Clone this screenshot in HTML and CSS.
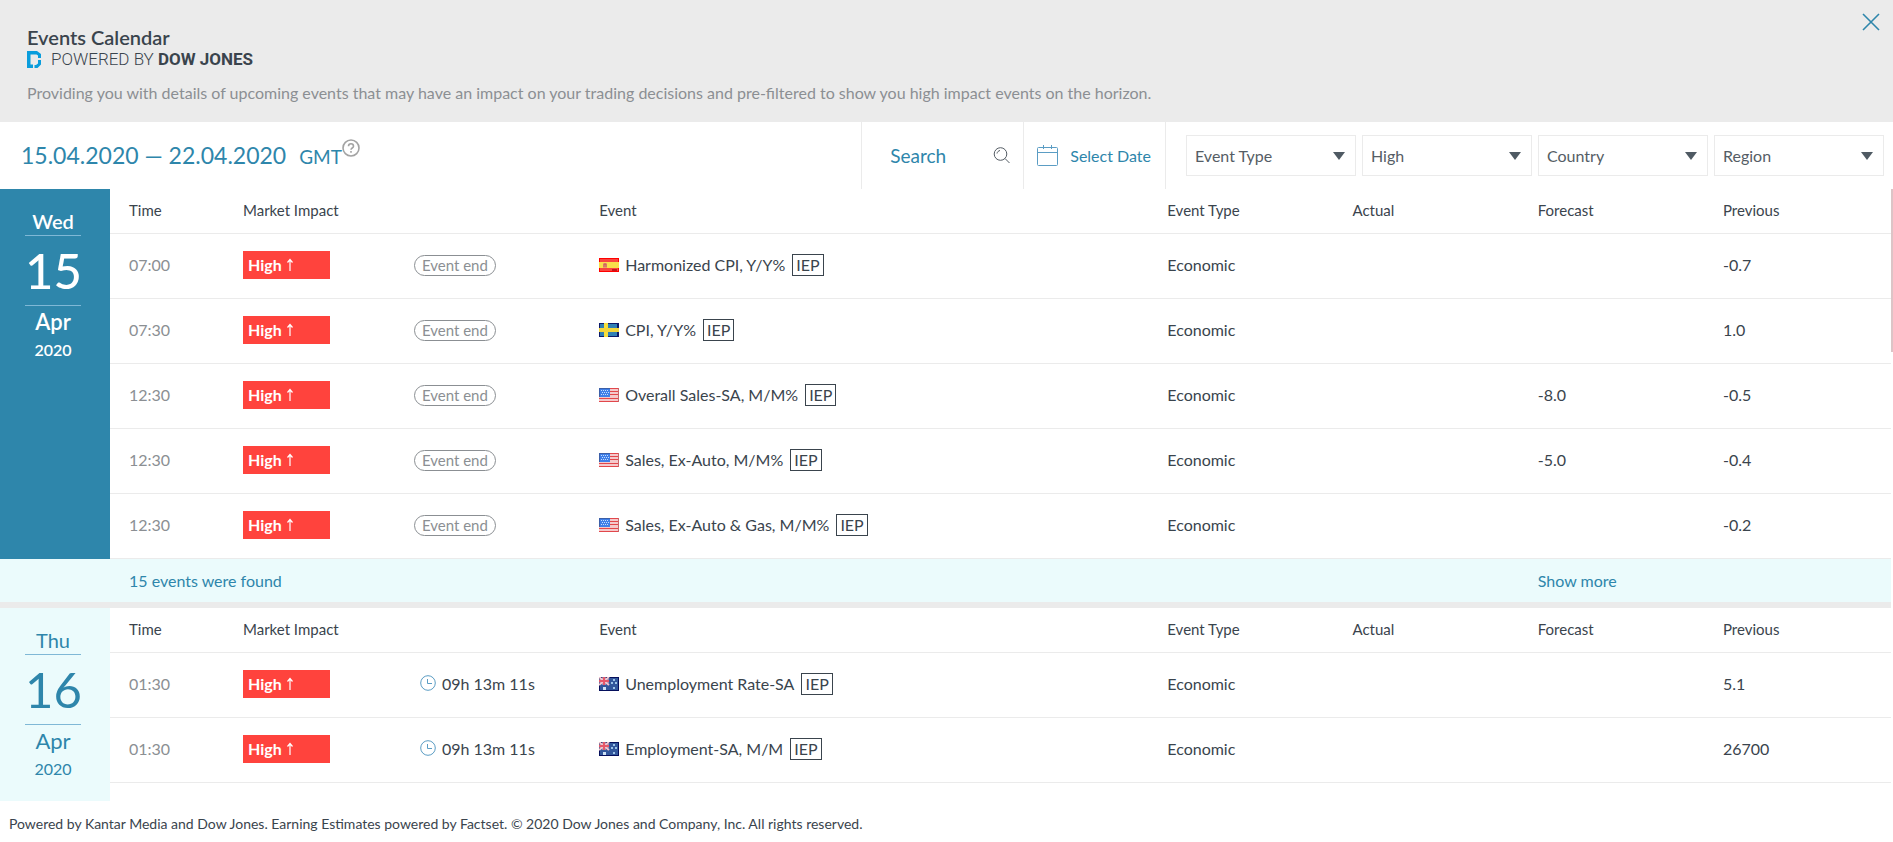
FILE: index.html
```html
<!DOCTYPE html>
<html lang="en">
<head>
  <meta charset="UTF-8">
  <meta name="viewport" content="width=device-width, initial-scale=1.0">
  <title>Events Calendar</title>
  <link rel="stylesheet" href="styles.css">
</head>
<body>

  <!-- Shared icons -->
  <svg class="sprite" aria-hidden="true">
    <symbol id="flag-es" viewBox="0 0 20 14">
      <rect width="20" height="14" fill="#f00"/>
      <rect x="1" y="1" width="18" height="12" fill="#f8453f"/>
      <rect y="4" width="20" height="6" fill="#f9e04a"/>
      <rect x="4" y="5" width="4" height="5" fill="#e9a06a"/>
      <path d="M5 9V6h2v3" fill="none" stroke="#c8525a"/>
      <path d="M13 11h5v2h-5z" fill="#c3161c"/>
    </symbol>
    <symbol id="flag-se" viewBox="0 0 20 14">
      <rect width="20" height="14" fill="#0b1a6b"/>
      <rect x="1" y="1" width="17" height="12" fill="#2f7fb4"/>
      <rect x="5" width="4" height="14" fill="#f7df3c"/>
      <rect y="5" width="20" height="4" fill="#f0d53c"/>
    </symbol>
    <symbol id="flag-us" viewBox="0 0 20 14">
      <rect width="20" height="14" fill="#f4c9cb"/>
      <path d="M0 .5h20M11 3.500h9M11 6.500h9M0 10.500h20M0 13.500h20" stroke="#e2474b"/>
      <path d="M19.500 0v14" stroke="#c9656a"/>
      <rect width="11" height="9" fill="#3f7fe8"/>
      <path d="M0 .5h11M.5 0v9" stroke="#3c5fa8"/>
      <path d="M2 2.500h8M3 4.500h8M2 6.500h8" stroke="#c5dcfb" stroke-dasharray="1 1"/>
    </symbol>
    <symbol id="flag-au" viewBox="0 0 20 14">
      <rect width="20" height="14" fill="#050f5c"/>
      <rect width="18" height="12" x="1" y="1" fill="#32579c"/>
      <path d="M0 0l10 8M10 0L0 8" stroke="#f3c3cb" stroke-width="2"/>
      <path d="M5 0v8M0 4h10" stroke="#f3c3cb" stroke-width="3"/>
      <path d="M5 0v8M0 4h10" stroke="#e5586a" stroke-width="2"/>
      <path d="M4 10h3v3H4z" fill="#cfe2f5"/>
      <path d="M14 2h2v2h-2zM12 5h2v2h-2zM16 5h2v2h-2zM14 10h2v2h-2z" fill="#9dc3e8"/>
    </symbol>
    <symbol id="icon-clock" viewBox="0 0 16 16">
      <circle cx="8" cy="8" r="7.300" fill="none" stroke="#5b9dc4"/>
      <path d="M7.500 4v4.500H12" fill="none" stroke="#5b9dc4"/>
    </symbol>
    <symbol id="icon-up" viewBox="0 0 8 14">
      <path d="M4 13V2M1.500 4.500L4 1.500l2.500 3" fill="none" stroke="#fff" stroke-width="1.200"/>
    </symbol>
  </svg>

  <header class="header">
    <div class="header-text">
      <h1>Events Calendar</h1>
      <div class="powered">
        <svg width="14" height="17" viewBox="0 0 14 17" aria-hidden="true">
          <path d="M0 0h10l4 3v4h-3V4.500L9.500 3.500H3.500v10H6V17H0zM14 9v4.500L10.500 17H7.500v-3h1.500l2-1.500V9z" fill="#0a9ddc"/>
        </svg>
        <span>POWERED BY <b>DOW JONES</b></span>
      </div>
      <p>Providing you with details of upcoming events that may have an impact on your trading decisions and pre-filtered to show you high impact events on the horizon.</p>
    </div>
    <button class="close-btn" aria-label="Close">
      <svg width="18" height="18" viewBox="0 0 18 18"><path d="M1 1l16 16M17 1L1 17" stroke="#2e86ab" stroke-width="1.600"/></svg>
    </button>
  </header>

  <div class="toolbar">
    <div class="period">
      <span class="period-dates">15.04.2020 — 22.04.2020</span>
      <span class="period-zone">GMT</span>
      <button class="help-btn" aria-label="Time zone help">
        <svg width="18" height="18" viewBox="0 0 18 18" fill="none" stroke="#a3a3a3">
          <circle cx="9" cy="9" r="8" stroke-width="1.600"/>
          <path d="M6.500 7.200c0-3.200 5-3.200 5 0 0 1.800-2.500 1.800-2.500 3.600M9 12v1.800" stroke-width="1.600"/>
        </svg>
      </button>
    </div>

    <div class="search">
      <input type="text" placeholder="Search" aria-label="Search">
      <button class="icon-btn" aria-label="Search events">
        <svg width="17" height="17" viewBox="0 0 17 17" fill="none" stroke="#555d65">
          <circle cx="7.500" cy="7" r="6.300"/>
          <path d="M12 11.500l4.500 4.500M4 6.500c.3-1.700 1.500-2.700 3-3"/>
        </svg>
      </button>
    </div>

    <button class="date-btn">
      <svg width="21" height="21" viewBox="0 0 21 21" fill="none" stroke="#5b9dc4">
        <rect x=".5" y="2.500" width="20" height="18" rx="1"/>
        <path d="M0 7.500h21M6.500 0v4M14.500 0v4"/>
      </svg>
      Select Date
    </button>

    <div class="filters">
      <select aria-label="Event Type"><option>Event Type</option></select>
      <select aria-label="Market Impact"><option>High</option></select>
      <select aria-label="Country"><option>Country</option></select>
      <select aria-label="Region"><option>Region</option></select>
    </div>
  </div>

  <main class="events">
    <section class="day">
      <div class="day-date today">
        <span class="weekday">Wed</span>
        <span class="number">15</span>
        <span class="month">Apr</span>
        <span class="year">2020</span>
      </div>
      <table class="day-table">
        <thead>
          <tr>
            <th class="col-time">Time</th>
            <th class="col-impact">Market Impact</th>
            <th class="col-status"></th>
            <th class="col-event">Event</th>
            <th class="col-value">Event Type</th>
            <th class="col-value">Actual</th>
            <th class="col-value">Forecast</th>
            <th>Previous</th>
          </tr>
        </thead>
        <tbody>
          <tr>
            <td class="time">07:00</td>
            <td><span class="impact">High <svg><use href="#icon-up"/></svg></span></td>
            <td><span class="ended">Event end</span></td>
            <td><div class="event"><svg class="flag"><use href="#flag-es"/></svg>Harmonized CPI, Y/Y%<span class="tag">IEP</span></div></td>
            <td>Economic</td>
            <td></td>
            <td></td>
            <td>-0.7</td>
          </tr>
          <tr>
            <td class="time">07:30</td>
            <td><span class="impact">High <svg><use href="#icon-up"/></svg></span></td>
            <td><span class="ended">Event end</span></td>
            <td><div class="event"><svg class="flag"><use href="#flag-se"/></svg>CPI, Y/Y%<span class="tag">IEP</span></div></td>
            <td>Economic</td>
            <td></td>
            <td></td>
            <td>1.0</td>
          </tr>
          <tr>
            <td class="time">12:30</td>
            <td><span class="impact">High <svg><use href="#icon-up"/></svg></span></td>
            <td><span class="ended">Event end</span></td>
            <td><div class="event"><svg class="flag"><use href="#flag-us"/></svg>Overall Sales-SA, M/M%<span class="tag">IEP</span></div></td>
            <td>Economic</td>
            <td></td>
            <td>-8.0</td>
            <td>-0.5</td>
          </tr>
          <tr>
            <td class="time">12:30</td>
            <td><span class="impact">High <svg><use href="#icon-up"/></svg></span></td>
            <td><span class="ended">Event end</span></td>
            <td><div class="event"><svg class="flag"><use href="#flag-us"/></svg>Sales, Ex-Auto, M/M%<span class="tag">IEP</span></div></td>
            <td>Economic</td>
            <td></td>
            <td>-5.0</td>
            <td>-0.4</td>
          </tr>
          <tr>
            <td class="time">12:30</td>
            <td><span class="impact">High <svg><use href="#icon-up"/></svg></span></td>
            <td><span class="ended">Event end</span></td>
            <td><div class="event"><svg class="flag"><use href="#flag-us"/></svg>Sales, Ex-Auto &amp; Gas, M/M%<span class="tag">IEP</span></div></td>
            <td>Economic</td>
            <td></td>
            <td></td>
            <td>-0.2</td>
          </tr>
        </tbody>
      </table>
    </section>

    <div class="summary">
      <span>15 events were found</span>
      <a href="#">Show more</a>
    </div>

    <section class="day last">
      <div class="day-date">
        <span class="weekday">Thu</span>
        <span class="number">16</span>
        <span class="month">Apr</span>
        <span class="year">2020</span>
      </div>
      <table class="day-table">
        <thead>
          <tr>
            <th class="col-time">Time</th>
            <th class="col-impact">Market Impact</th>
            <th class="col-status"></th>
            <th class="col-event">Event</th>
            <th class="col-value">Event Type</th>
            <th class="col-value">Actual</th>
            <th class="col-value">Forecast</th>
            <th>Previous</th>
          </tr>
        </thead>
        <tbody>
          <tr>
            <td class="time">01:30</td>
            <td><span class="impact">High <svg><use href="#icon-up"/></svg></span></td>
            <td><div class="countdown"><svg><use href="#icon-clock"/></svg>09h 13m 11s</div></td>
            <td><div class="event"><svg class="flag"><use href="#flag-au"/></svg>Unemployment Rate-SA<span class="tag">IEP</span></div></td>
            <td>Economic</td>
            <td></td>
            <td></td>
            <td>5.1</td>
          </tr>
          <tr>
            <td class="time">01:30</td>
            <td><span class="impact">High <svg><use href="#icon-up"/></svg></span></td>
            <td><div class="countdown"><svg><use href="#icon-clock"/></svg>09h 13m 11s</div></td>
            <td><div class="event"><svg class="flag"><use href="#flag-au"/></svg>Employment-SA, M/M<span class="tag">IEP</span></div></td>
            <td>Economic</td>
            <td></td>
            <td></td>
            <td>26700</td>
          </tr>
        </tbody>
      </table>
    </section>

    <div class="scroll-thumb"></div>
  </main>

  <footer class="footer">
    <p>Powered by Kantar Media and Dow Jones. Earning Estimates powered by Factset. © 2020 Dow Jones and Company, Inc. All rights reserved.</p>
  </footer>

</body>
</html>
```

FILE: styles.css
```css
* {
  margin: 0;
  padding: 0;
  box-sizing: border-box;
}

body {
  font-family: Lato, "Liberation Sans", sans-serif;
  font-size: 16px;
  line-height: 20px;
  color: #3a444d;
  background-color: #fff;
}

button,
input,
select {
  font-family: inherit;
  background: none;
  border: none;
}

button {
  cursor: pointer;
}

svg {
  display: block;
  flex-shrink: 0;
}

.sprite {
  position: absolute;
  width: 0;
  height: 0;
}

/* Header */
.header {
  display: flex;
  justify-content: space-between;
  align-items: flex-start;
  padding: 13px 13px 19px 27px;
  background-color: #ebebeb;
}

.header-text {
  padding-top: 12px;
}

.header h1 {
  font-size: 20px;
  line-height: 24px;
  font-weight: 600;
}

.powered {
  display: flex;
  align-items: center;
  gap: 10px;
  height: 20px;
  font-family: Roboto, sans-serif;
  font-size: 17px;
  font-weight: 300;
}

.powered b {
  font-weight: 700;
}

.header p {
  margin-top: 14px;
  color: #8b8f93;
}

/* Toolbar */
.toolbar {
  display: flex;
  height: 67px;
  color: #2e86ab;
}

.period {
  display: flex;
  flex: 1;
  align-items: baseline;
  padding: 17px 0 0 21px;
}

.period-dates {
  font-size: 23px;
  line-height: 32px;
}

.period-zone {
  margin-left: 13px;
  font-size: 19px;
}

.help-btn {
  align-self: flex-start;
}

.search {
  display: flex;
  align-items: center;
  width: 163px;
  padding: 0 13px 0 28px;
  border-left: 1px solid #ebebeb;
  border-right: 1px solid #ebebeb;
}

.search input {
  flex: 1;
  min-width: 0;
  font-size: 19px;
  color: #2e86ab;
}

.search input::placeholder {
  color: #2e86ab;
}

.date-btn {
  display: flex;
  align-items: center;
  gap: 12px;
  padding: 0 14px 0 13px;
  border-right: 1px solid #ebebeb;
  font-size: 16px;
  color: #2e86ab;
}

.filters {
  display: flex;
  align-items: center;
  gap: 6px;
  padding: 0 9px 0 20px;
}

.filters select {
  appearance: none;
  width: 170px;
  height: 41px;
  padding: 0 8px;
  border: 1px solid #ebebeb;
  background: url("data:image/svg+xml,%3Csvg xmlns='http://www.w3.org/2000/svg' width='12' height='8'%3E%3Cpath d='M0 0h12L6 8z' fill='%234f5a63'/%3E%3C/svg%3E") no-repeat right 10px center;
  font-size: 16px;
  color: #555d65;
}

/* Days */
.events {
  position: relative;
  padding-right: 2px;
}

.day {
  display: flex;
}

.day.last {
  min-height: 193px;
  border-top: 6px solid #ebebeb;
  box-sizing: content-box;
}

.day-date {
  display: flex;
  flex-direction: column;
  align-items: center;
  flex-shrink: 0;
  width: 110px;
  padding: 19px 4px 0 0;
  background-color: #ebfbfc;
  color: #2e86ab;
}

.day-date.today {
  background-color: #2e86ab;
  color: #fff;
  font-weight: 600;
}

.weekday {
  margin-bottom: 1px;
  font-size: 20px;
  line-height: 26px;
}

.number {
  width: 56px;
  border-top: 1px solid #7fb8d6;
  border-bottom: 1px solid #7fb8d6;
  font-size: 49px;
  line-height: 69px;
  text-align: center;
}

.today .number {
  font-weight: 500;
}

.month {
  font-size: 22px;
  line-height: 32px;
}

.year {
  font-size: 16px;
  line-height: 24px;
}

.day-table {
  flex: 1;
  width: 100%;
  align-self: flex-start;
  table-layout: fixed;
  border-collapse: separate;
  border-spacing: 0;
  text-align: left;
}

.day-table th,
.day-table td {
  padding: 0 0 2px 19px;
  border-bottom: 1px solid #ebebeb;
}

.day-table th {
  height: 45px;
  font-size: 15px;
  font-weight: 400;
}

.day-table td {
  height: 65px;
}

.col-time {
  width: 6.4%;
}

.col-impact {
  width: 9.6%;
}

.col-status {
  width: 10.4%;
}

.col-event {
  width: 31.9%;
}

.col-value {
  width: 10.4%;
}

.day-table .time {
  color: #8b8f93;
}

.impact {
  display: flex;
  align-items: center;
  gap: 4px;
  width: 87px;
  height: 28px;
  padding-left: 5px;
  background-color: #ff433d;
  color: #fff;
  font-weight: 700;
}

.impact svg {
  width: 8px;
  height: 14px;
}

.ended {
  display: inline-block;
  padding: 0 7px;
  border: 1px solid #8b8f93;
  border-radius: 11px;
  font-size: 15px;
  line-height: 19px;
  vertical-align: middle;
  color: #8b8f93;
}

.countdown {
  display: flex;
  align-items: center;
  gap: 6px;
  padding-left: 6px;
}

.countdown svg {
  width: 16px;
  height: 16px;
  margin-bottom: 3px;
}

.event {
  display: flex;
  align-items: center;
}

.flag {
  width: 20px;
  height: 14px;
  margin-right: 6px;
}

.tag {
  margin-left: 7px;
  padding: 0 3px;
  border: 1px solid #3a444d;
}

.summary {
  display: grid;
  grid-template-columns: 1fr 20.9%;
  align-items: center;
  height: 43px;
  padding-left: 110px;
  background-color: #ebfbfc;
  color: #2e86ab;
}

.summary span,
.summary a {
  padding-left: 19px;
}

.summary a {
  color: #2e86ab;
  text-decoration: none;
}

.scroll-thumb {
  position: absolute;
  top: 0;
  right: 0;
  width: 2px;
  height: 163px;
  background-color: #dcc4c6;
}

/* Footer */
.footer {
  padding: 13px 9px;
  font-size: 14px;
}
```
